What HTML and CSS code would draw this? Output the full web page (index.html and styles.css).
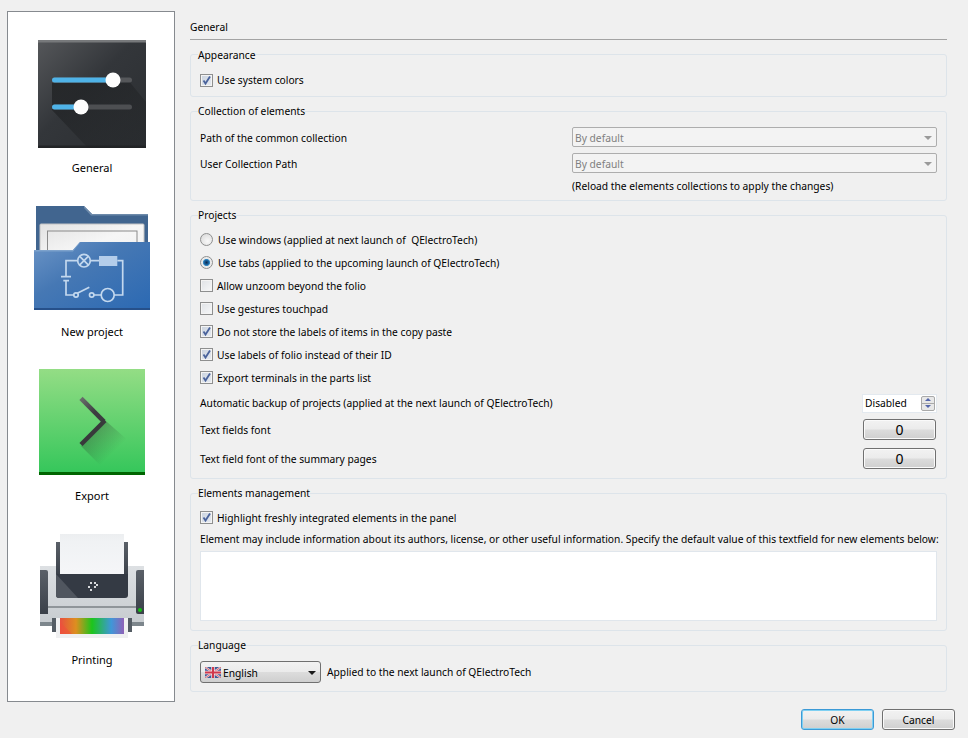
FILE: index.html
```html
<!DOCTYPE html>
<html lang="en">
<head>
<meta charset="utf-8">
<title>Configuration</title>
<link rel="stylesheet" href="styles.css">
</head>
<body>
<div class="dialog">
  <div class="top">
    <nav class="sidebar">
      <div class="nav-item">
        <svg class="nav-icon" viewBox="0 0 128 128" width="128" height="128">
          <defs>
            <linearGradient id="g1" x1="0" y1="0" x2="1" y2="1"><stop offset="0" stop-color="#55575a"/><stop offset=".45" stop-color="#33363a"/><stop offset="1" stop-color="#2b2e31"/></linearGradient>
            <linearGradient id="g1s" x1="0" y1="0" x2="1" y2="1"><stop offset="0" stop-color="#1e2022" stop-opacity=".8"/><stop offset="1" stop-color="#1e2022" stop-opacity=".15"/></linearGradient>
          </defs>
          <rect x="10" y="10" width="108" height="108" rx="3" fill="url(#g1)"/>
          <rect x="10" y="10" width="108" height="2.500" fill="#77797b"/>
          <rect x="10" y="115.500" width="108" height="2.500" fill="#222426"/>
          <path d="M24 53 L92 53 L100 50 L118 72 L118 118 L60 118 L24 80 Z" fill="url(#g1s)"/>
          <rect x="24" y="47.500" width="80" height="5" rx="2.500" fill="#55575a"/>
          <rect x="24" y="47.500" width="62" height="5" rx="2.500" fill="#4fb3e8"/>
          <circle cx="85" cy="50" r="7.500" fill="#fdfdfd"/>
          <rect x="24" y="74.500" width="80" height="5" rx="2.500" fill="#4d4f52"/>
          <rect x="24" y="74.500" width="30" height="5" rx="2.500" fill="#4fb3e8"/>
          <circle cx="53" cy="77" r="7.500" fill="#fdfdfd"/>
        </svg>
        <span class="nav-label">General</span>
      </div>
      <div class="nav-item">
        <svg class="nav-icon" viewBox="0 0 128 128" width="128" height="128">
          <defs>
            <linearGradient id="g2" x1="0" y1="0" x2="1" y2="1"><stop offset="0" stop-color="#6b94c6"/><stop offset=".4" stop-color="#4678b4"/><stop offset="1" stop-color="#2b69b3"/></linearGradient>
            <linearGradient id="g2b" x1="0" y1="0" x2="1" y2="1"><stop offset="0" stop-color="#e2e2e2"/><stop offset=".5" stop-color="#f6f6f6"/><stop offset="1" stop-color="#f0f0f0"/></linearGradient>
          </defs>
          <path d="M8 12 H56 L64 20 H120 V60 H8 Z" fill="#41658f"/>
          <path d="M56 12 L64 20 H120 V21.500 H63 L56 14 Z" fill="#6d8aaa"/>
          <rect x="12" y="30" width="104" height="40" rx="1" fill="url(#g2b)" stroke="#c4c4c4"/>
          <rect x="19.500" y="37" width="89.500" height="40" fill="none" stroke="#8a8a8a"/>
          <path d="M6 56 H45 L52 48 H122 V116 H6 Z" fill="url(#g2)"/>
          <path d="M6 56 H45 L52 48 H52.500 L45 57.500 H6 Z" fill="#7da2cc"/>
          <rect x="6" y="114" width="116" height="2" fill="#26508a"/>
          <g fill="none" stroke="#c3d8ee" stroke-width="1.700">
            <path d="M49.500 66.700 H38 V82.700 M38 86.700 V101 H46"/>
            <path d="M33 82.700 H43 M35.300 86.700 H41"/>
            <circle cx="56" cy="66.700" r="6.300"/>
            <path d="M51.500 62.200 L60.500 71.200 M60.500 62.200 L51.500 71.200"/>
            <path d="M62.300 66.700 H71 M89.300 66.700 H94.700 V101 H86.200 M73.200 101 H66"/>
            <circle cx="48" cy="101" r="2.200"/>
            <path d="M49.300 99.300 L61.300 93.300"/>
            <circle cx="63.700" cy="101" r="2.200"/>
            <circle cx="79.700" cy="101" r="6.500"/>
          </g>
          <rect x="71" y="62" width="18.300" height="10" fill="#b4cdea"/>
        </svg>
        <span class="nav-label">New project</span>
      </div>
      <div class="nav-item">
        <svg class="nav-icon" viewBox="0 0 128 128" width="128" height="128">
          <defs>
            <linearGradient id="g3" x1="0" y1="0" x2="0" y2="1"><stop offset="0" stop-color="#94dd85"/><stop offset="1" stop-color="#33c65a"/></linearGradient>
            <linearGradient id="g3b" gradientUnits="userSpaceOnUse" x1="62" y1="72" x2="85" y2="95"><stop offset="0" stop-color="#222" stop-opacity=".32"/><stop offset="1" stop-color="#222" stop-opacity="0"/></linearGradient>
            <linearGradient id="g3c" gradientUnits="userSpaceOnUse" x1="53" y1="40" x2="76" y2="64"><stop offset="0" stop-color="#6a6f6c"/><stop offset=".6" stop-color="#3c3d40"/></linearGradient>
          </defs>
          <rect x="11" y="11" width="106" height="106" fill="url(#g3)"/>
          <rect x="11" y="114" width="106" height="3" fill="#006400"/>
          <path d="M53 88 L72 107 L98.700 81.300 L78.700 63.700 Z" fill="url(#g3b)"/>
          <path d="M53 40.300 L76 63.700" fill="none" stroke="url(#g3c)" stroke-width="4.500"/>
          <path d="M77 62.500 L53 86.500" fill="none" stroke="#38393b" stroke-width="4.500"/>
        </svg>
        <span class="nav-label">Export</span>
      </div>
      <div class="nav-item">
        <svg class="nav-icon" viewBox="0 0 128 128" width="128" height="128">
          <defs>
            <linearGradient id="g4" x1="0" y1="0" x2="0" y2="1"><stop offset="0" stop-color="#eceef0"/><stop offset=".2" stop-color="#f0f2f4"/><stop offset="1" stop-color="#f5f6f8"/></linearGradient>
            <linearGradient id="g4b" x1="0" y1="0" x2="0" y2="1"><stop offset="0" stop-color="#5a6068"/><stop offset="1" stop-color="#3a4049"/></linearGradient>
            <linearGradient id="g4c" x1="0" y1="0" x2="1" y2="0"><stop offset="0" stop-color="#e8503f"/><stop offset=".25" stop-color="#dd8f20"/><stop offset=".5" stop-color="#1cc51c"/><stop offset=".8" stop-color="#3f97d8"/><stop offset="1" stop-color="#8f62b8"/></linearGradient>
            <linearGradient id="g4d" x1="0" y1="0" x2="0" y2="1"><stop offset="0" stop-color="#dde0e3"/><stop offset="1" stop-color="#c6cbcf"/></linearGradient>
          </defs>
          <rect x="12" y="44" width="104" height="60" fill="url(#g4d)"/>
          <rect x="12" y="100" width="104" height="4" fill="#7d868c"/>
          <rect x="20" y="84" width="88" height="2" fill="#8f9599"/>
          <path d="M12 48 H18 Q20 48 20 50 V92 H12 Z" fill="url(#g4b)"/>
          <path d="M116 48 H110 Q108 48 108 50 V90 Q108 92 110 92 H116 Z" fill="url(#g4b)"/>
          <circle cx="112" cy="88" r="2" fill="#16c016"/>
          <rect x="28" y="20" width="72" height="34" fill="url(#g4b)"/>
          <rect x="32" y="12" width="64" height="40" fill="url(#g4)"/>
          <path d="M28 52 H100 V73 Q100 76 97 76 H31 Q28 76 28 73 Z" fill="#343a44"/>
          <path d="M28 52 L50 76 H31 Q28 76 28 73 Z" fill="#50565f"/>
          <g fill="#d8dadd"><rect x="62" y="60" width="2" height="2"/><rect x="66" y="60" width="2" height="2"/><rect x="68" y="62" width="2" height="2"/><rect x="66" y="64" width="2" height="2"/><rect x="60" y="64" width="2" height="2"/><rect x="62" y="67" width="2" height="2"/></g>
          <rect x="24" y="96" width="4" height="14" fill="#545c64"/>
          <rect x="100" y="96" width="4" height="14" fill="#545c64"/>
          <rect x="28" y="96" width="72" height="20" fill="#eff0f1"/>
          <rect x="32" y="96" width="64" height="16" fill="url(#g4c)"/>
          <path d="M32 100 L44 112 H32 Z" fill="#f0503c" opacity=".6"/>
        </svg>
        <span class="nav-label">Printing</span>
      </div>
    </nav>

    <main class="page">
      <div class="page-title">General</div>

      <fieldset class="group group-appearance">
        <legend>Appearance</legend>
        <label class="row"><span class="check on"><svg viewBox="0 0 11 11" width="11" height="11"><path d="M2.500 5.500 L4.500 8.500 L9 1.500" fill="none" stroke="#4a639c" stroke-width="1.800"/></svg></span>Use system colors</label>
      </fieldset>

      <fieldset class="group group-collection">
        <legend>Collection of elements</legend>
        <div class="path-grid">
          <span>Path of the common collection</span>
          <div class="combo disabled"><span>By default</span><i class="caret"></i></div>
          <span>User Collection Path</span>
          <div class="combo disabled"><span>By default</span><i class="caret"></i></div>
          <span class="path-note">(Reload the elements collections to apply the changes)</span>
        </div>
      </fieldset>

      <fieldset class="group group-projects">
        <legend>Projects</legend>
        <label class="row"><span class="radio"></span><span class="radio-text">Use windows (applied at next launch of&nbsp; QElectroTech)</span></label>
        <label class="row"><span class="radio on"></span><span class="radio-text">Use tabs (applied to the upcoming launch of QElectroTech)</span></label>
        <label class="row"><span class="check"></span>Allow unzoom beyond the folio</label>
        <label class="row"><span class="check"></span>Use gestures touchpad</label>
        <label class="row"><span class="check on"><svg viewBox="0 0 11 11" width="11" height="11"><path d="M2.500 5.500 L4.500 8.500 L9 1.500" fill="none" stroke="#4a639c" stroke-width="1.800"/></svg></span>Do not store the labels of items in the copy paste</label>
        <label class="row"><span class="check on"><svg viewBox="0 0 11 11" width="11" height="11"><path d="M2.500 5.500 L4.500 8.500 L9 1.500" fill="none" stroke="#4a639c" stroke-width="1.800"/></svg></span>Use labels of folio instead of their ID</label>
        <label class="row"><span class="check on"><svg viewBox="0 0 11 11" width="11" height="11"><path d="M2.500 5.500 L4.500 8.500 L9 1.500" fill="none" stroke="#4a639c" stroke-width="1.800"/></svg></span>Export terminals in the parts list</label>
        <div class="row split row-spin">
          <span>Automatic backup of projects (applied at the next launch of QElectroTech)</span>
          <div class="spin"><span>Disabled</span><div class="spin-btns"><i class="up"></i><i class="down"></i></div></div>
        </div>
        <div class="row split row-font">
          <span>Text fields font</span>
          <button class="btn btn-font" type="button">0</button>
        </div>
        <div class="row split row-font2">
          <span>Text field font of the summary pages</span>
          <button class="btn btn-font" type="button">0</button>
        </div>
      </fieldset>

      <fieldset class="group group-elements">
        <legend>Elements management</legend>
        <label class="row"><span class="check on"><svg viewBox="0 0 11 11" width="11" height="11"><path d="M2.500 5.500 L4.500 8.500 L9 1.500" fill="none" stroke="#4a639c" stroke-width="1.800"/></svg></span>Highlight freshly integrated elements in the panel</label>
        <div class="info-line">Element may include information about its authors, license, or other useful information. Specify the default value of this textfield for new elements below:</div>
        <div class="textarea"></div>
      </fieldset>

      <fieldset class="group group-language">
        <legend>Language</legend>
        <div class="lang-row">
          <div class="lang-combo">
            <svg class="flag" viewBox="0 0 16 11" width="16" height="11">
              <rect width="16" height="11" fill="#3f5a96"/>
              <path d="M0 0 L16 11 M16 0 L0 11" stroke="#f0dfe2" stroke-width="2"/>
              <path d="M0 0 L16 11 M16 0 L0 11" stroke="#d24a5a" stroke-width=".8"/>
              <path d="M8 0 V11 M0 5.500 H16" stroke="#f0dfe2" stroke-width="3.500"/>
              <path d="M8 0 V11 M0 5.500 H16" stroke="#d0384c" stroke-width="2"/>
            </svg>
            <span class="lang-name">English</span>
            <i class="caret dark"></i>
          </div>
          <span>Applied to the next launch of QElectroTech</span>
        </div>
      </fieldset>
    </main>
  </div>
  <div class="actions">
    <button class="btn btn-action default" type="button">OK</button>
    <button class="btn btn-action" type="button">Cancel</button>
  </div>
</div>
</body>
</html>
```
FILE: styles.css
```css
* { box-sizing: border-box; }
html, body { margin: 0; padding: 0; }
body {
  background: #f0f0f0;
  color: #000;
  font: 10.25px/14px "Noto Sans", "Open Sans", sans-serif;
}
.dialog { width: 968px; height: 738px; padding: 11px 13px 0 7px; overflow: hidden; }
.top { display: flex; gap: 15px; height: 691px; }
.sidebar {
  width: 168px;
  background: #fff;
  border: 1px solid #868a8f;
  padding: 18px 0 0 2px;
  flex: none;
}
.nav-item { height: 164px; display: flex; flex-direction: column; align-items: center; }
.nav-icon { display: block; flex: none; }
.nav-label { line-height: 20px; height: 20px; font-size: 11px; }

.page { width: 757px; padding: 9px 0 0; flex: none; }
.page-title { height: 20px; line-height: 15px; border-bottom: 1px solid #a3a3a3; }

.group {
  margin: 7px 0 0;
  padding: 0 9px;
  min-width: 0;
  border: 1px solid #dde4ea;
  border-radius: 3px;
}
.group legend { padding: 0; margin-left: -2px; height: 14px; line-height: 15px; background: #f0f0f0; }
.group-appearance legend { line-height: 17px; }
.group-appearance { height: 50px; padding-top: 8px; }
.group-collection { height: 97px; }
.group-projects { height: 271px; padding-top: 6px; }
.group-elements { height: 145px; padding-top: 7px; }
.group-language { height: 54px; padding-top: 9px; }

.row { display: flex; align-items: center; height: 23px; }
.group-appearance .row { height: 22px; }
.split { justify-content: space-between; }
.row-spin { height: 22px; margin-top: 3px; }
.row-font { height: 21px; margin-top: 5px; padding-right: 1px; }
.row-font2 { height: 21px; margin-top: 8px; padding-right: 1px; }

.check {
  width: 13px; height: 13px; margin-right: 4px; flex: none;
  border: 1px solid #8e8f8f;
  background: linear-gradient(135deg, #dfe2e6, #f7f8f9);
  box-shadow: inset 0 0 0 1px #f4f4f4;
  display: flex;
}
.check.on { background: linear-gradient(135deg, #c9d2de, #e8ecf2); }
.radio {
  width: 13px; height: 13px; margin-right: 5px; flex: none;
  border: 1px solid #8e8f8f; border-radius: 50%;
  background: radial-gradient(circle at 60% 65%, #f8f8f8, #d6d6d6);
}
.radio.on {
  background: radial-gradient(circle, #0b2a4e 0, #1d6aa8 32%, #3f93c9 42%, #e8e8e8 50%, #f4f4f4 100%);
}

.path-grid {
  display: grid;
  grid-template-columns: 372px 365px;
  grid-template-rows: 20px 20px 20px;
  row-gap: 6px;
  align-items: center;
  padding-top: 9px;
}
.path-grid > span { margin-top: 2px; }
.path-grid > .path-note { grid-column: 2; margin-top: -6px; }

.combo {
  height: 20px; display: flex; align-items: center; justify-content: space-between;
  padding: 1px 4px 0 2px;
  border: 1px solid #adadad; border-radius: 2px;
  background: #f3f3f3;
}
.combo.disabled { color: #808080; }
.caret { width: 0; height: 0; border: 4px solid transparent; border-top: 4px solid #9a9a9a; border-bottom: 0; flex: none; }
.caret.dark { border-top-color: #1a1a1a; }

.spin {
  width: 75px; height: 19px; display: flex; align-items: center; justify-content: space-between;
  background: #fff; border: 1px solid #e3e9ef; padding: 0 1px 0 2px;
}
.spin-btns { width: 14px; height: 15px; display: flex; flex-direction: column; border: 1px solid #a9a9a9; border-radius: 2px; background: #e8e8e8; }
.spin-btns i { flex: 1; display: flex; align-items: center; justify-content: center; }
.spin-btns i::after { content: ""; border: 3px solid transparent; }
.spin-btns .up::after { border-bottom: 3px solid #5566aa; border-top: 0; }
.spin-btns .down::after { border-top: 3px solid #5566aa; border-bottom: 0; }
.spin-btns .down { border-top: 1px solid #a9a9a9; }

.btn {
  font: inherit; color: #000; padding: 0; cursor: default;
  border: 1px solid #707070; border-radius: 3px;
  background: linear-gradient(#f2f2f2 0, #ebebeb 48%, #dcdcdc 52%, #cfcfcf 100%);
  box-shadow: inset 0 0 0 1px #fafafa;
}
.btn-font { width: 73px; height: 21px; font-size: 14px; }
.btn-action { width: 73px; height: 21px; }
.btn.default { border-color: #3c9ad6; box-shadow: inset 0 0 0 1px #7fd0f2; }

.group-elements .row { height: 21px; }
.info-line { margin-top: 4px; height: 14px; white-space: nowrap; }
.textarea { margin-top: 5px; height: 70px; background: #fff; border: 1px solid #e0e6ec; }

.lang-row { display: flex; align-items: center; gap: 6px; }
.lang-combo {
  width: 121px; height: 22px; display: flex; align-items: center;
  padding: 1px 4px 0 4px;
  border: 1px solid #707070; border-radius: 3px;
  background: linear-gradient(#f2f2f2 0, #ebebeb 48%, #dcdcdc 52%, #cfcfcf 100%);
}
.flag { flex: none; margin-right: 2px; }
.lang-name { flex: 1; }

.actions { display: flex; justify-content: flex-end; gap: 8px; margin-top: 7px; }
```
